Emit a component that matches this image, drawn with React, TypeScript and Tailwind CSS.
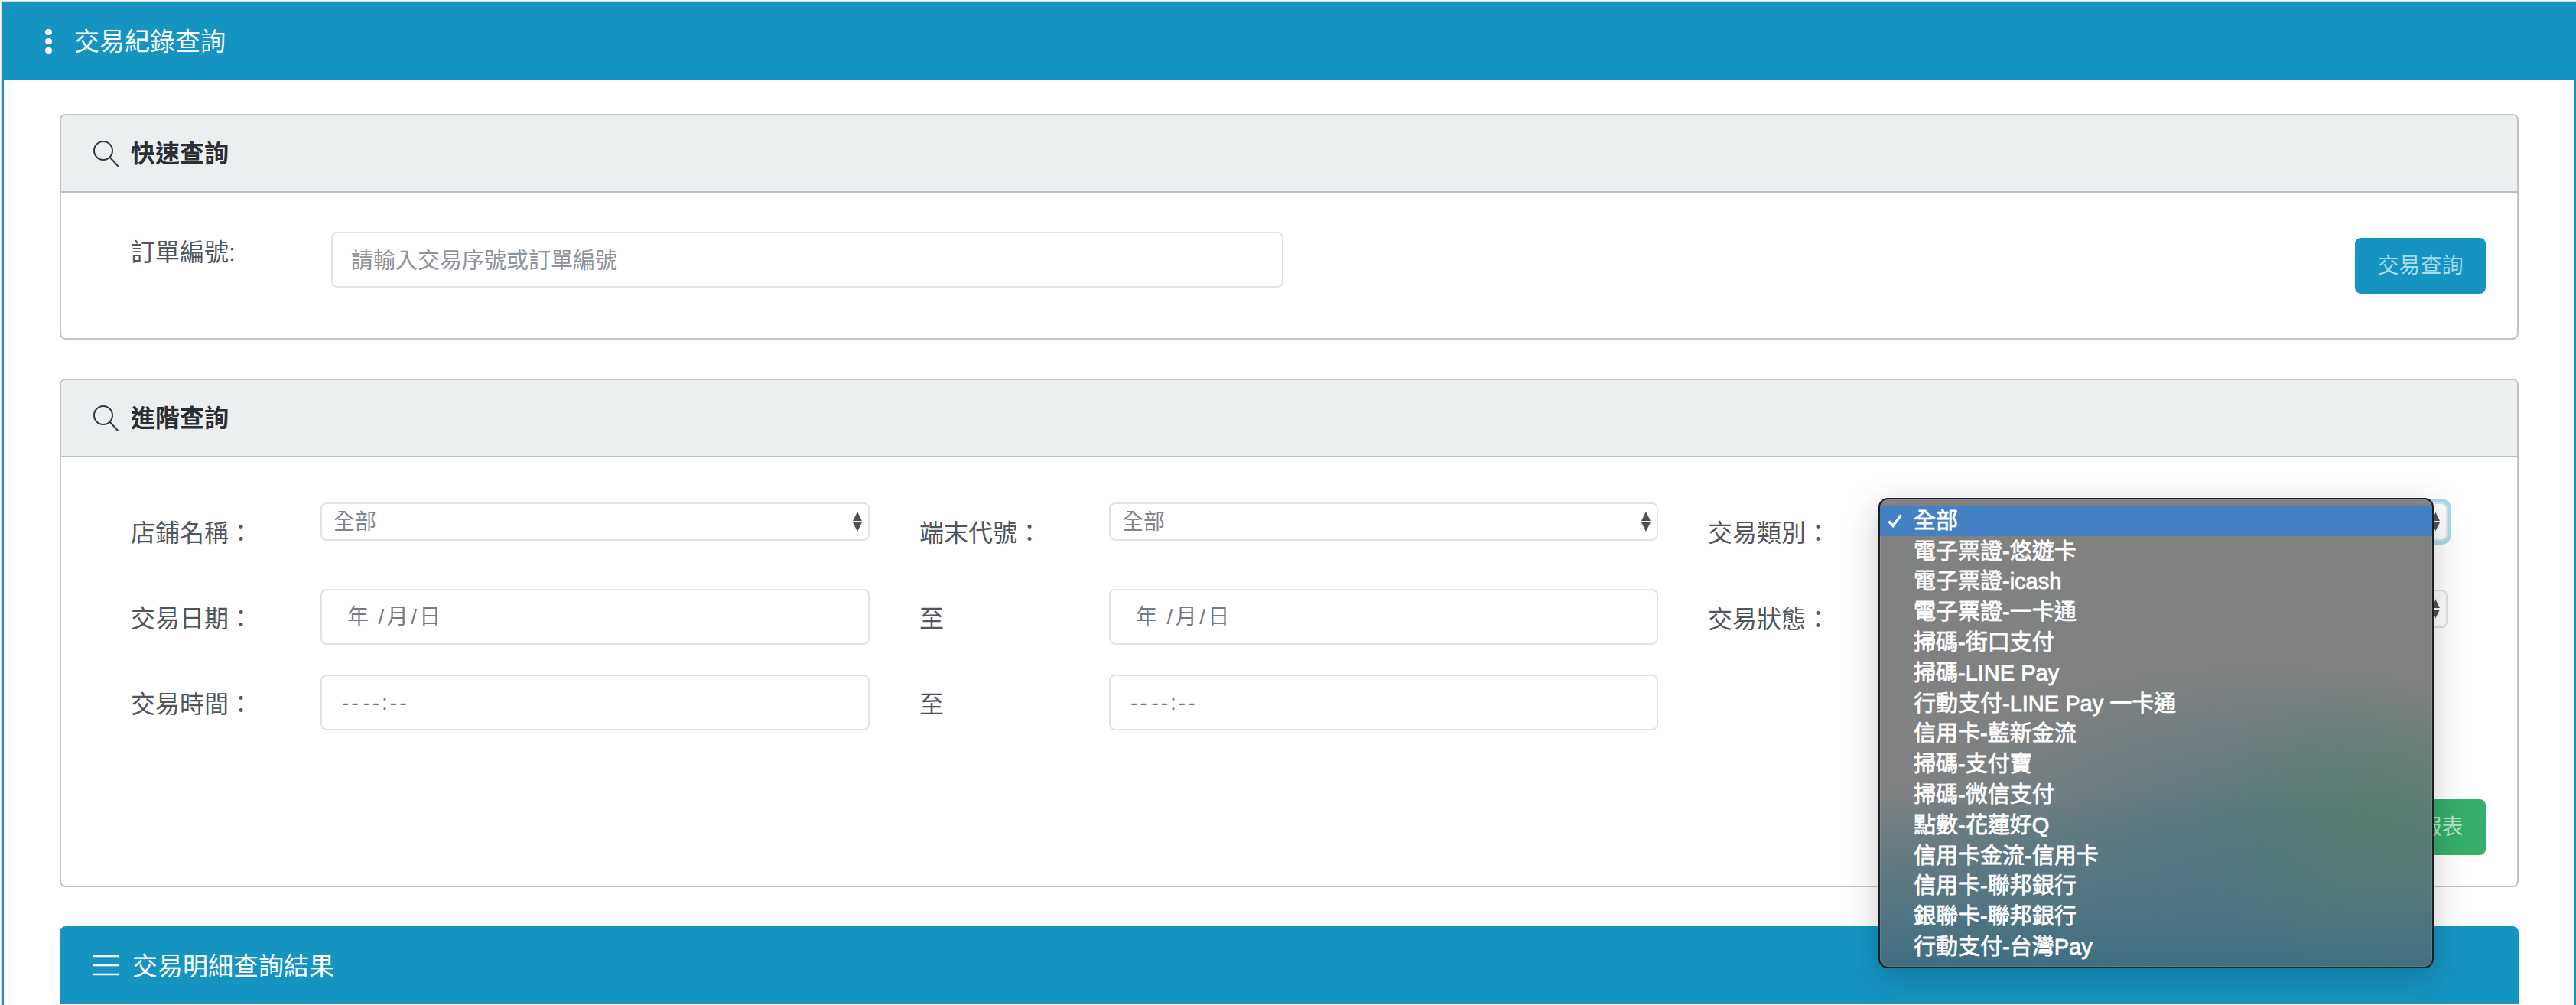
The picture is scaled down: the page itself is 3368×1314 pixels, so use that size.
const font = "[font-family:'Liberation_Sans','Noto_Sans_CJK_TC',sans-serif]"

const options = [
  "全部",
  "電子票證-悠遊卡",
  "電子票證-icash",
  "電子票證-一卡通",
  "掃碼-街口支付",
  "掃碼-LINE Pay",
  "行動支付-LINE Pay 一卡通",
  "信用卡-藍新金流",
  "掃碼-支付寶",
  "掃碼-微信支付",
  "點數-花蓮好Q",
  "信用卡金流-信用卡",
  "信用卡-聯邦銀行",
  "銀聯卡-聯邦銀行",
  "行動支付-台灣Pay",
]

function SearchIcon() {
  return (
    <svg width="34" height="34" viewBox="0 0 34 34" fill="none" stroke="#33383c" strokeWidth="2" className="shrink-0">
      <circle cx="14" cy="13" r="12" />
      <path d="M23 22 L33 33" strokeLinecap="round" />
    </svg>
  )
}

function SelectArrows() {
  return (
    <svg width="12" height="26" viewBox="0 0 12 26" fill="#4d5257" className="shrink-0">
      <path d="M6 0 L12 12 L0 12 Z" />
      <path d="M0 14 L12 14 L6 26 Z" />
    </svg>
  )
}

function Label({ text, className = "" }: { text: string; className?: string }) {
  return <div className={"-ml-px w-[248px] shrink-0 text-[32px] leading-[32px] text-[#50555a] " + className}>{text}</div>
}

// the two selects in the third column sit under the open menu, so their value is left out
function FakeSelect({ value, className = "" }: { value?: string; className?: string }) {
  return (
    <div className={"flex h-[50px] flex-1 items-center justify-between rounded-[8px] border-2 border-[#dfe3e6] bg-white pl-[15px] pr-[8px] text-[28px] leading-[28px] text-[#7f868c] " + className}>
      <span className="pt-[2px]">{value}</span>
      <SelectArrows />
    </div>
  )
}

function FakeInput({ children, className = "" }: { children: React.ReactNode; className?: string }) {
  return (
    <div className={"flex h-[73px] flex-1 items-center rounded-[8px] border-2 border-[#dfe3e6] bg-white text-[28px] text-[#737b81] " + className}>
      {children}
    </div>
  )
}

function PanelHead({ title }: { title: string }) {
  return (
    <div className="flex h-[101px] items-center gap-[16px] rounded-t-[6px] border-b-2 border-[#b9c1c6] bg-[#ebeff0] pl-[41px]">
      <SearchIcon />
      <span className="text-[32px] font-bold leading-[32px] text-[#2a2f33]">{title}</span>
    </div>
  )
}

function Dropdown() {
  return (
    <div className="absolute left-[2456px] top-[651px] h-[615px] w-[726px] rounded-[12px] border-2 border-[#1c1e20] bg-[radial-gradient(ellipse_260px_190px_at_650px_425px,rgba(82,128,102,0.62),transparent),radial-gradient(ellipse_480px_240px_at_500px_460px,rgba(65,115,130,0.65),transparent),linear-gradient(to_bottom,transparent_62%,rgba(58,110,130,0.95)_100%),linear-gradient(#808181,#808181)] pt-[8px] shadow-[0_12px_44px_rgba(0,0,0,0.22),inset_0_0_0_1px_rgba(255,255,255,0.12)]">
      {options.map((o, i) => (
        <div key={o} className={"flex h-[39.8px] items-center pl-[10px] text-[29px] leading-[30px] text-white [-webkit-text-stroke:0.8px_white] " + (i === 0 ? "bg-[#4480c4]" : "")}>
          <span className="flex w-[34px] shrink-0 items-center">
            {i === 0 && (
              <svg width="19" height="18" viewBox="0 0 19 18" fill="none" stroke="#fff" strokeWidth="3.4">
                <path d="M1.5 9.5 L7 15.5 L17.5 1.5" />
              </svg>
            )}
          </span>
          <span className="whitespace-pre">{o}</span>
        </div>
      ))}
    </div>
  )
}

export default function App() {
  return (
    <div className={"relative h-[1314px] w-[3368px] overflow-hidden bg-white pl-px pt-px " + font}>
      <div className="h-full border-l-2 border-t-2 border-[#dcdcdc]">
        <div className="h-full border-x-2 border-[#1594c2]">
          <header className="flex h-[102px] items-center gap-[29px] border-b border-[#b9c6cc] bg-[#1594c2] pl-[54px]">
            <div className="flex flex-col gap-[4px]">
              <span className="h-[8px] w-[9px] rounded-full bg-white" />
              <span className="h-[8px] w-[9px] rounded-full bg-white" />
              <span className="h-[8px] w-[9px] rounded-full bg-white" />
            </div>
            <h1 className="pt-[2px] text-[33px] font-normal leading-[33px] text-white">交易紀錄查詢</h1>
          </header>

          <main className="flex flex-col gap-[51px] px-[73px] pt-[44px]">
            <section className="h-[295px] rounded-[8px] border-2 border-[#bdc3c7]">
              <PanelHead title="快速查詢" />
              <div className="flex items-start pl-[91px] pr-[41px] pt-[51px]">
                <div className="mt-[11px] w-[262px] shrink-0 text-[32px] leading-[32px] text-[#50555a]">訂單編號:</div>
                <input
                  readOnly
                  placeholder="請輸入交易序號或訂單編號"
                  className="h-[73px] w-[1245px] rounded-[8px] border-2 border-[#dfe3e6] bg-white pl-[24px] pt-[4px] text-[29px] outline-none placeholder:text-[#8d9399]"
                />
                <button className="ml-auto mt-[8px] h-[73px] w-[171px] rounded-[8px] bg-[#1594c2] text-[28px] text-[#a5dbea]">交易查詢</button>
              </div>
            </section>

            <section className="h-[665px] rounded-[8px] border-2 border-[#bdc3c7]">
              <PanelHead title="進階查詢" />
              <div className="pl-[92px] pr-[41px] pt-[59px]">
                <div className="grid grid-cols-[965px_965px_966px] grid-rows-[113px_112px_72px] gap-x-[66px]">
                  <div className="flex items-start">
                    <Label text="店鋪名稱：" className="mt-[24px]" />
                    <FakeSelect value="全部" />
                  </div>
                  <div className="flex items-start">
                    <Label text="端末代號：" className="mt-[24px]" />
                    <FakeSelect value="全部" />
                  </div>
                  <div className="flex items-start">
                    <Label text="交易類別：" className="mt-[24px]" />
                    <FakeSelect className="border-[#5bbdd9] shadow-[0_0_0_5px_#aadcec]" />
                  </div>

                  <div className="flex items-start">
                    <Label text="交易日期：" className="mt-[23px]" />
                    <FakeInput className="whitespace-pre pl-[33px] tracking-[3.4px] [word-spacing:-2px]">年 /月/日</FakeInput>
                  </div>
                  <div className="flex items-start">
                    <Label text="至" className="mt-[23px]" />
                    <FakeInput className="whitespace-pre pl-[33px] tracking-[3.4px] [word-spacing:-2px]">年 /月/日</FakeInput>
                  </div>
                  <div className="flex items-start">
                    <Label text="交易狀態：" className="mt-[24px]" />
                    <FakeSelect className="mt-px h-[48px]" />
                  </div>

                  <div className="flex items-start">
                    <Label text="交易時間：" className="mt-[23px]" />
                    <FakeInput className="h-[72px] whitespace-pre pl-[26px] tracking-[3px] [word-spacing:-8px]">-- --:--</FakeInput>
                  </div>
                  <div className="flex items-start">
                    <Label text="至" className="mt-[23px]" />
                    <FakeInput className="h-[72px] whitespace-pre pl-[26px] tracking-[3px] [word-spacing:-8px]">-- --:--</FakeInput>
                  </div>
                </div>
                <div className="mt-[91px] flex justify-end">
                  <button className="h-[73px] w-[171px] rounded-[8px] bg-[#35ae6b] text-[28px] text-[#b5e3c8]">匯出報表</button>
                </div>
              </div>
            </section>

            <section className="flex h-[102px] items-center gap-[17px] rounded-t-[8px] bg-[#1594c2] pl-[44px]">
              <svg width="34" height="28" viewBox="0 0 34 28" stroke="#fff" strokeWidth="2.5" className="shrink-0">
                <path d="M0 2 H33 M0 14 H33 M0 26 H33" />
              </svg>
              <span className="pt-[2px] text-[33px] leading-[33px] text-white">交易明細查詢結果</span>
            </section>
          </main>
        </div>
      </div>
      <Dropdown />
    </div>
  )
}
